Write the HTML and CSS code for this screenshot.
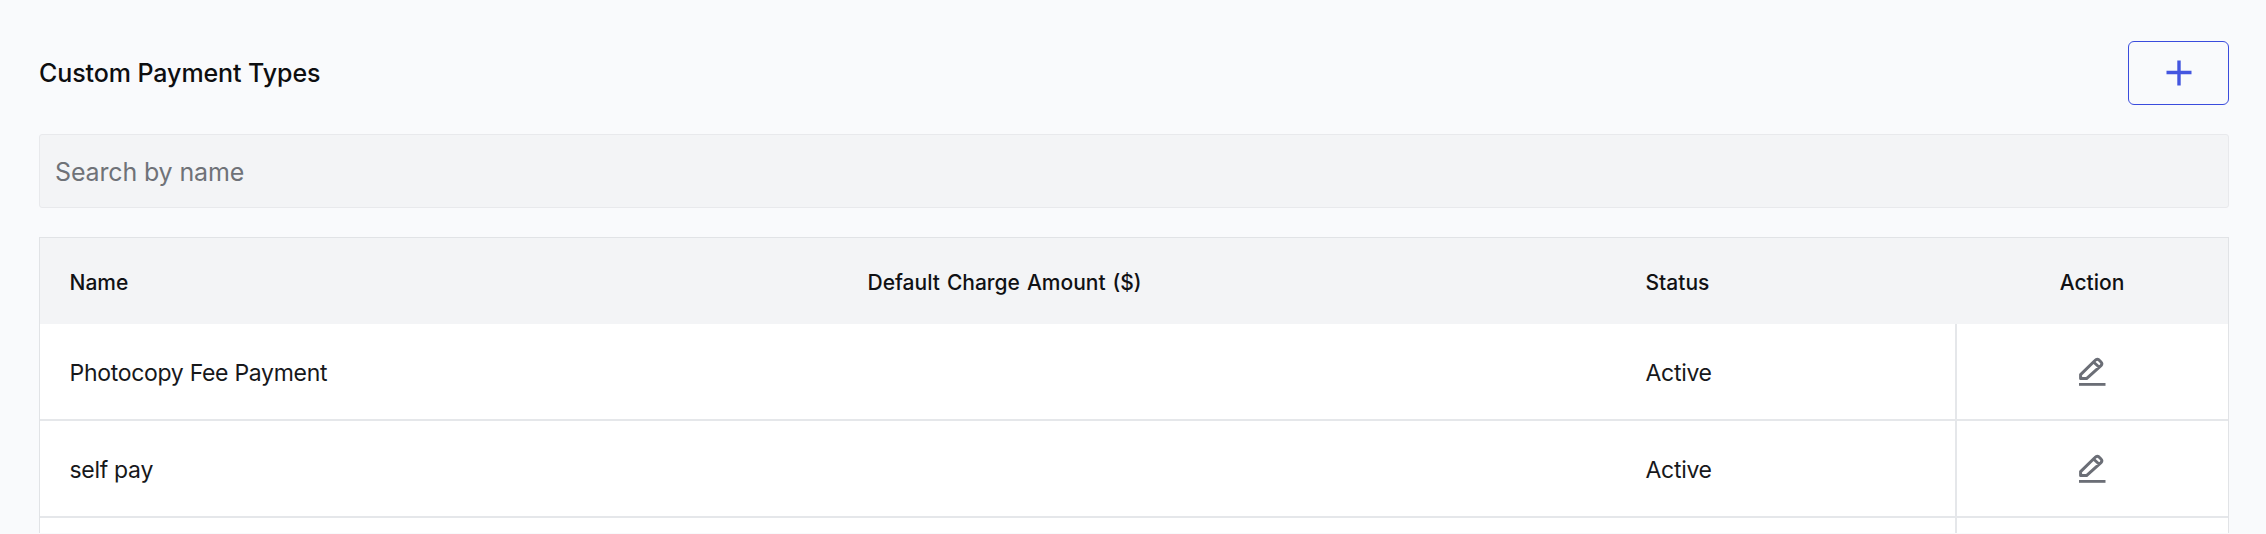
FILE: index.html
```html
<!DOCTYPE html>
<html lang="en">
<head>
<meta charset="utf-8">
<title>Custom Payment Types</title>
<link rel="stylesheet" href="styles.css">
</head>
<body>
<main class="page">
  <header class="top">
    <h1 class="title">Custom Payment Types</h1>
    <button class="add" type="button" aria-label="Add">
      <svg width="26" height="26" viewBox="0 0 26 26"><path d="M13 0.5V25.5M0.5 12.5H25.5" stroke="#4456e0" stroke-width="3.4" fill="none"/></svg>
    </button>
  </header>
  <input class="search" type="text" placeholder="Search by name">
  <div class="table-wrap">
    <table class="grid">
      <colgroup><col class="c1"><col class="c2"><col class="c3"><col class="c4"></colgroup>
      <thead>
        <tr><th>Name</th><th class="amount">Default Charge Amount ($)</th><th>Status</th><th class="act-h">Action</th></tr>
      </thead>
      <tbody>
        <tr class="first"><td>Photocopy Fee Payment</td><td></td><td>Active</td><td class="act"><svg class="pen" width="27" height="29" viewBox="0 0 27 29"><path d="M1.6 21.6V17.6L16 3.5C17.4 2 18.8 2 20 3L22 5C23.2 6.2 23.2 7.4 22 8.6L7.5 21.6ZM14.5 5L20.5 10.5" fill="none" stroke="#6b6e76" stroke-width="3" stroke-linejoin="round"/><path d="M0 27.4H26.5" stroke="#6b6e76" stroke-width="2.8"/></svg></td></tr>
        <tr><td>self pay</td><td></td><td>Active</td><td class="act"><svg class="pen" width="27" height="29" viewBox="0 0 27 29"><path d="M1.6 21.6V17.6L16 3.5C17.4 2 18.8 2 20 3L22 5C23.2 6.2 23.2 7.4 22 8.6L7.5 21.6ZM14.5 5L20.5 10.5" fill="none" stroke="#6b6e76" stroke-width="3" stroke-linejoin="round"/><path d="M0 27.4H26.5" stroke="#6b6e76" stroke-width="2.8"/></svg></td></tr>
        <tr class="cut"><td></td><td></td><td></td><td class="act"></td></tr>
      </tbody>
    </table>
  </div>
</main>
</body>
</html>
```

FILE: styles.css
```css
* { box-sizing: border-box; }
html, body { margin: 0; height: 534px; overflow: hidden; }
body { background: #f9fafc; font-family: Inter, "Noto Sans", sans-serif; color: #101114; }
.page { padding: 41px 37px 0 39px; display: flex; flex-direction: column; }
.top { display: flex; justify-content: space-between; align-items: center; height: 64px; }
.title { margin: 0; font-size: 25px; font-weight: 550; letter-spacing: -0.08px; color: #0d0e10; }
.add { width: 101px; height: 64px; background: transparent; border: 1px solid #3a4cdd; border-radius: 6px; padding: 0; display: flex; align-items: center; justify-content: center; }
.search { margin-top: 29px; height: 74px; width: 100%; background: #f3f4f6; border: 1px solid #e8e9ec; border-radius: 3px; padding: 1px 15px 0; font: 400 25px Inter, "Noto Sans", sans-serif; letter-spacing: -0.15px; outline: none; }
.search::placeholder { color: #6f7278; opacity: 1; }
.table-wrap { margin-top: 29px; border: 1px solid #e1e3e6; border-bottom: 0; background: #fff; }
.grid { width: 100%; border-collapse: collapse; table-layout: fixed; }
.c1 { width: 798px; } .c2 { width: 778px; } .c3 { width: 340px; } .c4 { width: 272px; }
th { height: 86px; background: #f3f4f6; text-align: left; padding: 2px 29px 0 29.5px; font-size: 21px; font-weight: 550; color: #101114; }
th.amount { word-spacing: 1.4px; }
th.act-h { text-align: center; font-weight: 450; padding: 2px 0 0; }
td { height: 97px; padding: 3px 29px 0 29.5px; font-size: 23px; font-weight: 400; letter-spacing: -0.3px; color: #17181b; border-bottom: 2px solid #e5e7ea; }
.first td { height: 96px; }
td.act { border-left: 2px solid #e5e7ea; text-align: center; padding: 0; }
.pen { display: block; margin: 0 auto; }
.cut td { height: 16px; border-bottom: 0; padding: 0; }
```
